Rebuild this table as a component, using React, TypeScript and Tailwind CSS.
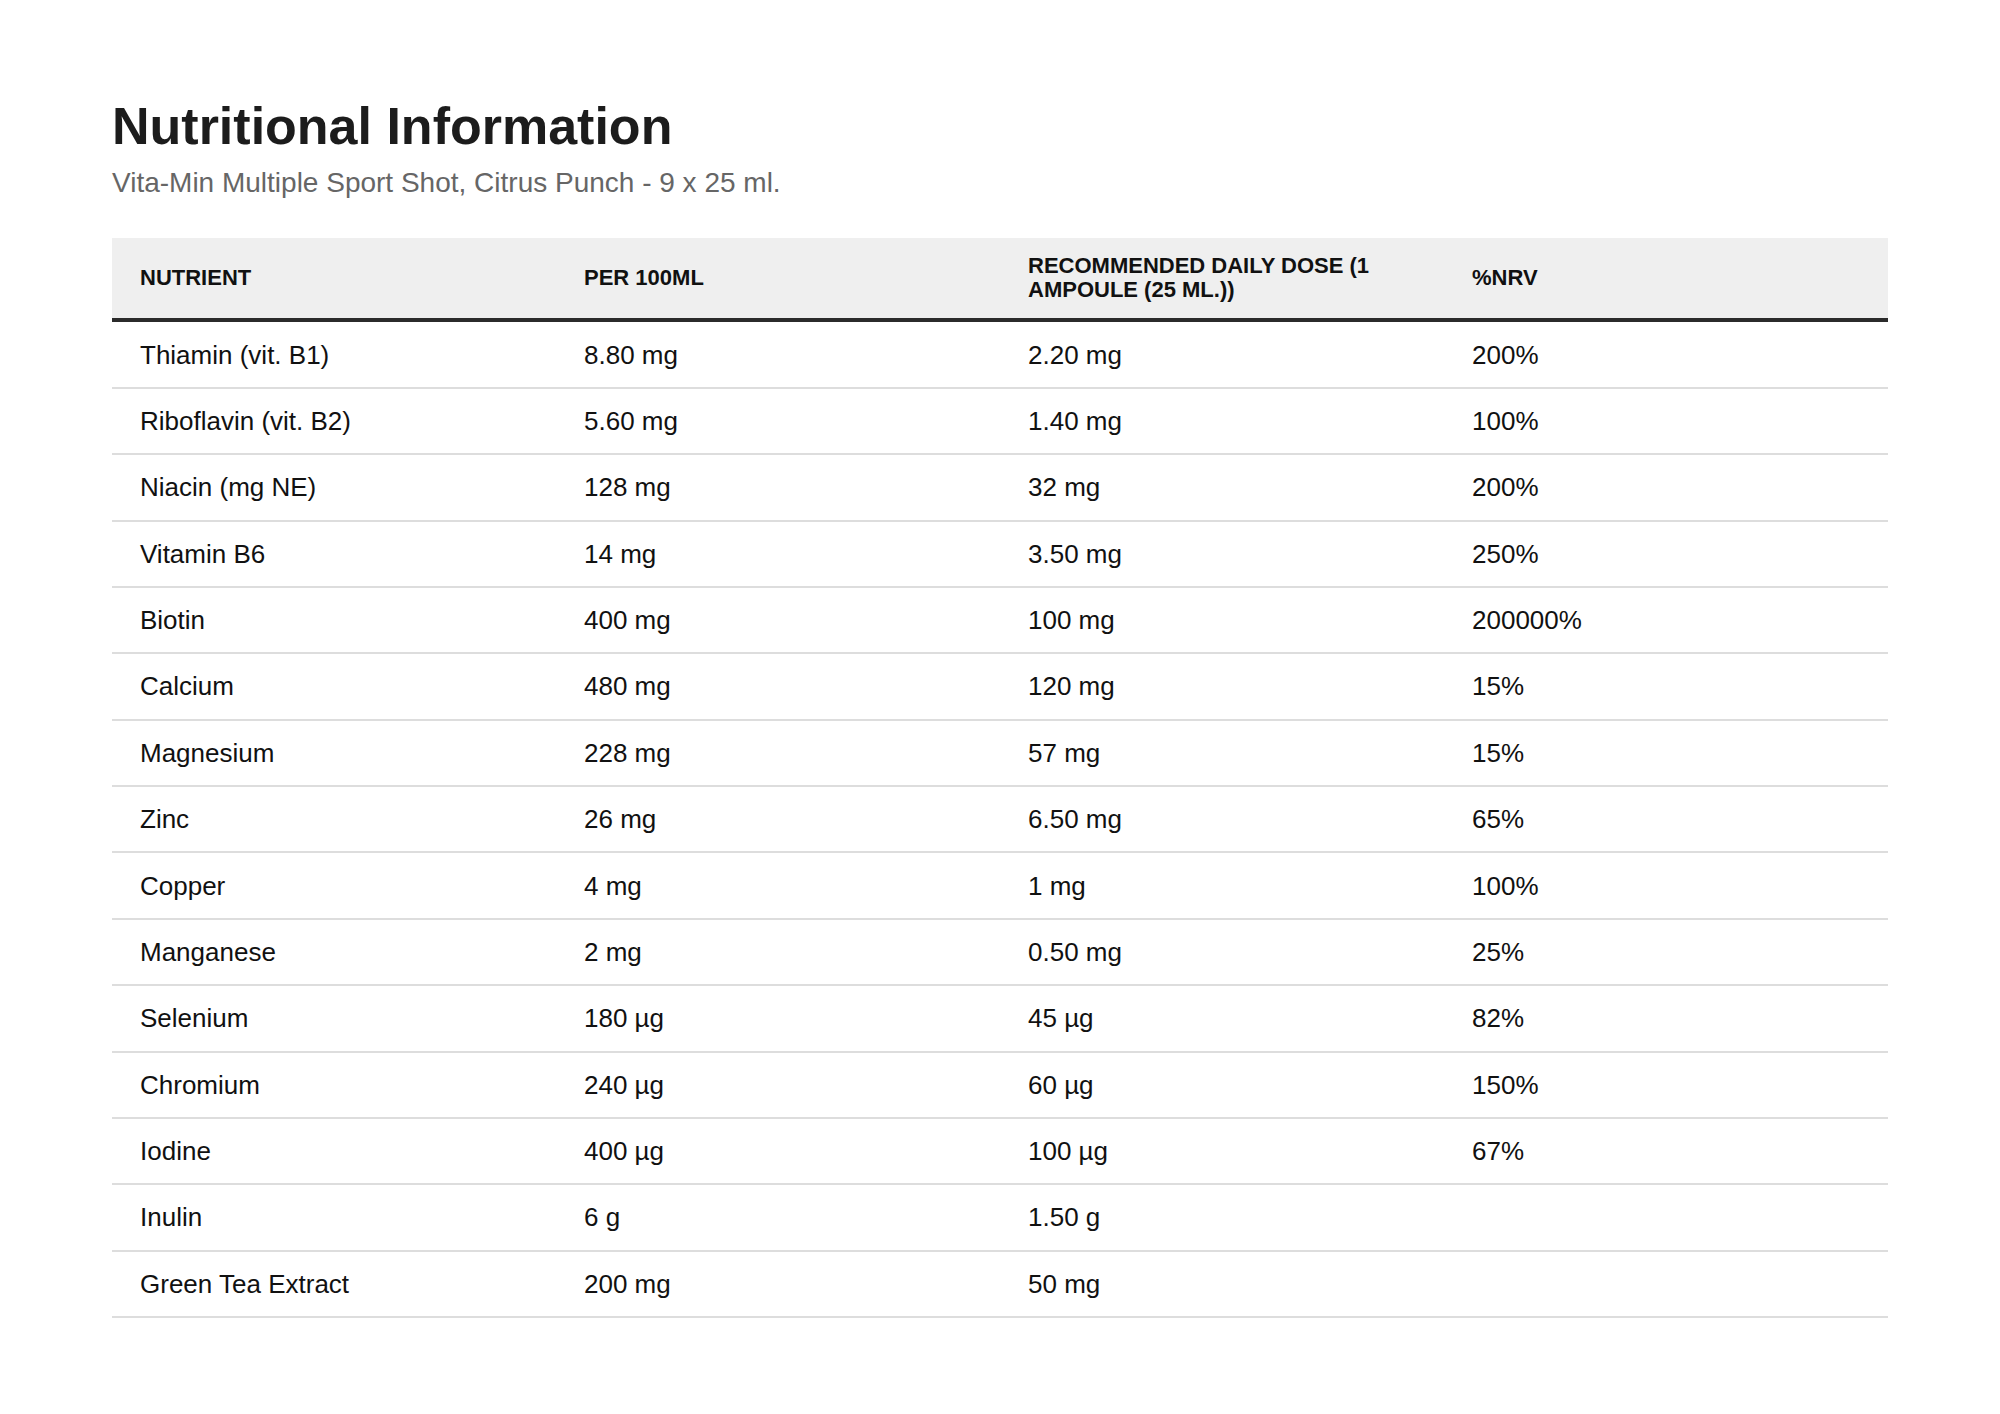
import React from "react";

const rows: [string, string, string, string][] = [
  ["Thiamin (vit. B1)", "8.80 mg", "2.20 mg", "200%"],
  ["Riboflavin (vit. B2)", "5.60 mg", "1.40 mg", "100%"],
  ["Niacin (mg NE)", "128 mg", "32 mg", "200%"],
  ["Vitamin B6", "14 mg", "3.50 mg", "250%"],
  ["Biotin", "400 mg", "100 mg", "200000%"],
  ["Calcium", "480 mg", "120 mg", "15%"],
  ["Magnesium", "228 mg", "57 mg", "15%"],
  ["Zinc", "26 mg", "6.50 mg", "65%"],
  ["Copper", "4 mg", "1 mg", "100%"],
  ["Manganese", "2 mg", "0.50 mg", "25%"],
  ["Selenium", "180 µg", "45 µg", "82%"],
  ["Chromium", "240 µg", "60 µg", "150%"],
  ["Iodine", "400 µg", "100 µg", "67%"],
  ["Inulin", "6 g", "1.50 g", ""],
  ["Green Tea Extract", "200 mg", "50 mg", ""],
];

const headers = [
  "Nutrient",
  "Per 100ml",
  "Recommended daily dose (1 ampoule (25 ml.))",
  "%NRV",
];

export default function App() {
  return (
    <div
      className="min-h-screen bg-white px-[112px] pt-[95px] pb-[80px]"
      style={{ fontFamily: '"Liberation Sans", Arial, Helvetica, sans-serif' }}
    >
      <h1 className="m-0 text-[52px] font-bold leading-[1.2] text-[#1c1c1c]">
        Nutritional Information
      </h1>
      <p className="mt-[5px] text-[28px] leading-[42px] text-[#666666]">
        Vita-Min Multiple Sport Shot, Citrus Punch - 9 x 25 ml.
      </p>
      <table className="mt-[34px] w-full table-fixed border-separate border-spacing-0">
        <thead>
          <tr>
            {headers.map((h) => (
              <th
                key={h}
                className="border-b-4 border-[#2b2b2b] bg-[#efefef] px-[28px] py-[16px] text-left align-middle text-[22px] font-bold uppercase leading-[24px] text-[#111111]"
              >
                {h}
              </th>
            ))}
          </tr>
        </thead>
        <tbody>
          {rows.map((r) => (
            <tr key={r[0]}>
              {r.map((c, i) => (
                <td
                  key={i}
                  className="border-b-2 border-[#dddddd] px-[28px] py-[11.2px] text-left align-middle text-[26px] leading-[42px] text-[#111111]"
                >
                  {c}
                </td>
              ))}
            </tr>
          ))}
        </tbody>
      </table>
    </div>
  );
}
